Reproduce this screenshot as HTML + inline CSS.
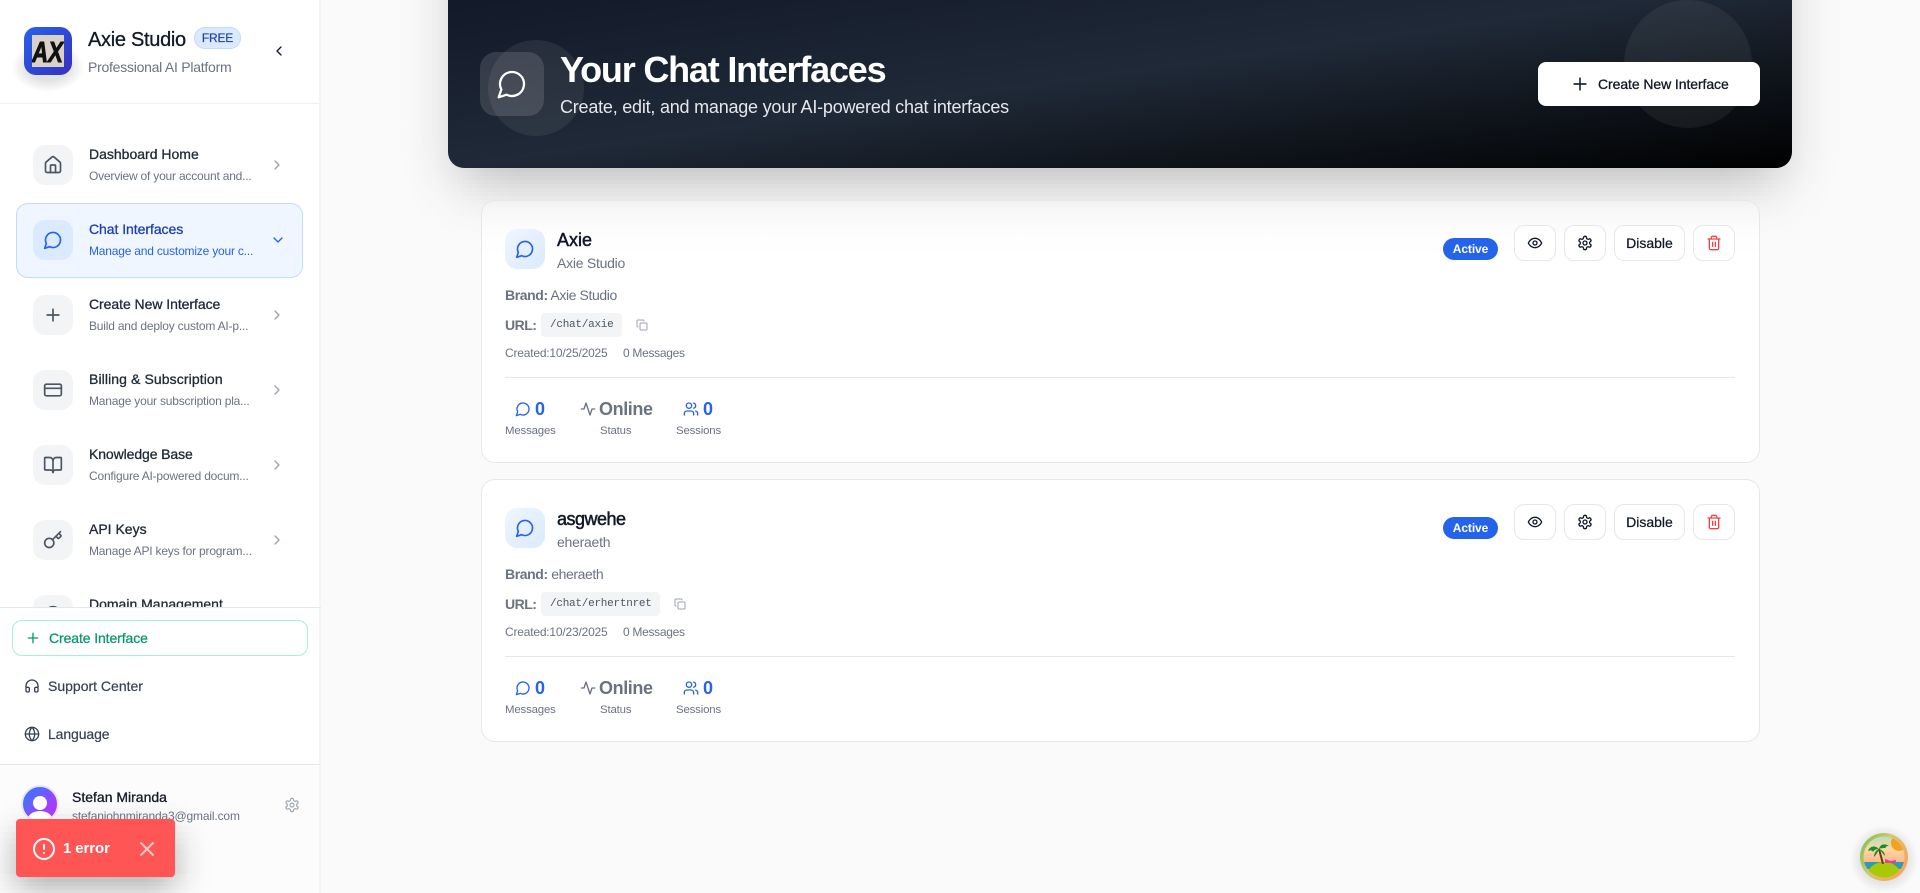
<!DOCTYPE html>
<html lang="en"><head><meta charset="utf-8"><title>Your Chat Interfaces</title>
<style>
*{box-sizing:border-box}
html,body{margin:0;padding:0;width:1920px;height:893px;overflow:hidden;background:#fafafa;font-family:"Liberation Sans",sans-serif}
.a{position:absolute}
.s{position:absolute;left:0;width:100%}
.t{position:absolute;white-space:nowrap;line-height:20px}
svg.i{position:absolute;fill:none;stroke:currentColor;stroke-width:2;stroke-linecap:round;stroke-linejoin:round}
.box{position:absolute;left:33px;width:40px;height:40px;border-radius:12px;background:#f3f4f6}
.nt{left:89px;font-size:14px;font-weight:400;color:#1f2937;-webkit-text-stroke:.3px #1f2937}
.ns{left:89px;font-size:12px;color:#6b7280;letter-spacing:-.2px}
.btn{position:absolute;top:0;height:36px;background:#fff;border:1px solid #e5e7eb;border-radius:10px}
.card{position:absolute;left:481px;width:1279px;height:263px;background:#fff;border:1px solid #e5e7eb;border-radius:14px}
.g{color:#6b7280}
.lb{font-size:11.4px;letter-spacing:-.15px}
.mono{font-size:11px;letter-spacing:-.25px;color:#4b5563;font-family:'Liberation Mono',monospace}
</style></head><body>
<svg width="0" height="0" style="position:absolute"><defs>
<symbol id="msg" viewBox="0 0 24 24"><path d="M7.9 20A9 9 0 1 0 4 16.1L2 22Z"/></symbol>
<symbol id="home" viewBox="0 0 24 24"><path d="M15 21v-8a1 1 0 0 0-1-1h-4a1 1 0 0 0-1 1v8"/><path d="M3 10a2 2 0 0 1 .709-1.528l7-5.999a2 2 0 0 1 2.582 0l7 5.999A2 2 0 0 1 21 10v9a2 2 0 0 1-2 2H5a2 2 0 0 1-2-2z"/></symbol>
<symbol id="plus" viewBox="0 0 24 24"><path d="M5 12h14M12 5v14"/></symbol>
<symbol id="card" viewBox="0 0 24 24"><rect x="2" y="5" width="20" height="14" rx="2"/><path d="M2 10h20"/></symbol>
<symbol id="book" viewBox="0 0 24 24"><path d="M12 7v14"/><path d="M3 18a1 1 0 0 1-1-1V4a1 1 0 0 1 1-1h5a4 4 0 0 1 4 4 4 4 0 0 1 4-4h5a1 1 0 0 1 1 1v13a1 1 0 0 1-1 1h-6a3 3 0 0 0-3 3 3 3 0 0 0-3-3z"/></symbol>
<symbol id="key" viewBox="0 0 24 24"><path d="m15.5 7.5 2.3 2.3a1 1 0 0 0 1.4 0l2.1-2.1a1 1 0 0 0 0-1.4L19 4"/><path d="m21 2-9.6 9.6"/><circle cx="7.5" cy="15.5" r="5.5"/></symbol>
<symbol id="cr" viewBox="0 0 24 24"><path d="m9 18 6-6-6-6"/></symbol>
<symbol id="cd" viewBox="0 0 24 24"><path d="m6 9 6 6 6-6"/></symbol>
<symbol id="cl" viewBox="0 0 24 24"><path d="m15 18-6-6 6-6"/></symbol>
<symbol id="head" viewBox="0 0 24 24"><path d="M3 14h3a2 2 0 0 1 2 2v3a2 2 0 0 1-2 2H5a2 2 0 0 1-2-2v-7a9 9 0 0 1 18 0v7a2 2 0 0 1-2 2h-1a2 2 0 0 1-2-2v-3a2 2 0 0 1 2-2h3"/></symbol>
<symbol id="globe" viewBox="0 0 24 24"><circle cx="12" cy="12" r="10"/><path d="M12 2a14.500 14.500 0 0 0 0 20 14.500 14.500 0 0 0 0-20"/><path d="M2 12h20"/></symbol>
<symbol id="gear" viewBox="0 0 24 24"><path d="M12.220 2h-.44a2 2 0 0 0-2 2v.18a2 2 0 0 1-1 1.730l-.43.25a2 2 0 0 1-2 0l-.15-.08a2 2 0 0 0-2.730.73l-.22.38a2 2 0 0 0 .73 2.730l.15.1a2 2 0 0 1 1 1.720v.51a2 2 0 0 1-1 1.740l-.15.09a2 2 0 0 0-.73 2.730l.22.38a2 2 0 0 0 2.730.73l.15-.08a2 2 0 0 1 2 0l.43.25a2 2 0 0 1 1 1.730V20a2 2 0 0 0 2 2h.44a2 2 0 0 0 2-2v-.18a2 2 0 0 1 1-1.730l.43-.25a2 2 0 0 1 2 0l.15.08a2 2 0 0 0 2.730-.73l.22-.39a2 2 0 0 0-.73-2.730l-.15-.08a2 2 0 0 1-1-1.740v-.5a2 2 0 0 1 1-1.740l.15-.09a2 2 0 0 0 .73-2.730l-.22-.38a2 2 0 0 0-2.730-.73l-.15.08a2 2 0 0 1-2 0l-.43-.25a2 2 0 0 1-1-1.730V4a2 2 0 0 0-2-2z"/><circle cx="12" cy="12" r="3"/></symbol>
<symbol id="eye" viewBox="0 0 24 24"><path d="M2 12s3-7 10-7 10 7 10 7-3 7-10 7-10-7-10-7Z"/><circle cx="12" cy="12" r="3"/></symbol>
<symbol id="trash" viewBox="0 0 24 24"><path d="M3 6h18"/><path d="M19 6v14c0 1-1 2-2 2H7c-1 0-2-1-2-2V6"/><path d="M8 6V4c0-1 1-2 2-2h4c1 0 2 1 2 2v2"/><path d="M10 11v6M14 11v6"/></symbol>
<symbol id="copy" viewBox="0 0 24 24"><rect x="8" y="8" width="14" height="14" rx="2"/><path d="M4 16c-1.100 0-2-.9-2-2V4c0-1.100.9-2 2-2h10c1.100 0 2 .9 2 2"/></symbol>
<symbol id="act" viewBox="0 0 24 24"><path d="M22 12h-4l-3 9L9 3l-3 9H2"/></symbol>
<symbol id="users" viewBox="0 0 24 24"><path d="M16 21v-2a4 4 0 0 0-4-4H6a4 4 0 0 0-4 4v2"/><circle cx="9" cy="7" r="4"/><path d="M22 21v-2a4 4 0 0 0-3-3.870"/><path d="M16 3.130a4 4 0 0 1 0 7.750"/></symbol>
</defs></svg>

<!-- Sidebar -->
<div class="a" style="left:0;top:0;width:321px;height:893px;background:#fff;border-right:2px solid #f3f4f6"></div>
<div class="a" style="left:12px;top:42px;width:72px;height:50px;background:radial-gradient(ellipse closest-side,#e2e2e2 55%,#fff 100%)"></div>
<div class="a" style="left:24px;top:27px;width:48px;height:48px;border-radius:12px;background:linear-gradient(135deg,#2563eb,#3730c0)"></div>
<svg class="a" style="left:32px;top:35px" width="32" height="32" viewBox="0 0 32 32"><rect width="32" height="32" fill="#d9d2c9"/><text x="0" y="27" font-family="Liberation Sans" font-weight="700" font-style="italic" font-size="29" fill="#111" stroke="#111" stroke-width=".9" textLength="31" lengthAdjust="spacingAndGlyphs">AX</text></svg>
<div class="t" style="left:88px;top:28px;font-size:20px;line-height:24px;color:#111827;-webkit-text-stroke:.3px #111827;letter-spacing:-.3px">Axie Studio</div>
<div class="a" style="left:194px;top:27px;width:47px;height:22px;border-radius:11px;background:#dbeafe;border:1px solid #bfdbfe;color:#1e40af;font-size:12px;line-height:20px;text-align:center;-webkit-text-stroke:.2px #1e40af;letter-spacing:-.2px">FREE</div>
<div class="t" style="left:88px;top:57px;font-size:14px;color:#6b7280;letter-spacing:-.25px">Professional AI Platform</div>
<svg class="i" style="left:271px;top:43px;color:#111827" width="16" height="16"><use href="#cl"/></svg>
<div class="a" style="left:0;top:103px;width:319px;height:1px;background:#f0f0f1"></div>

<div class="a" style="left:0;top:104px;width:319px;height:503px;overflow:hidden">
<div class="a" style="left:0;top:-104px;width:319px;height:720px">
 <div class="box" style="top:145px"></div><svg class="i" style="left:43px;top:155px;color:#4b5563" width="20" height="20"><use href="#home"/></svg>
 <div class="t nt" style="top:144px">Dashboard Home</div><div class="t ns" style="top:166px">Overview of your account and...</div>
 <svg class="i" style="left:269px;top:157px;color:#9ca3af" width="16" height="16"><use href="#cr"/></svg>

 <div class="a" style="left:16px;top:203px;width:287px;height:75px;background:#eff6ff;border:1px solid #bfdbfe;border-radius:12px"></div>
 <div class="box" style="top:220px;background:#dbeafe"></div><svg class="i" style="left:43px;top:230px;color:#2563eb" width="20" height="20"><use href="#msg"/></svg>
 <div class="t nt" style="top:219px;color:#1e40af;-webkit-text-stroke-color:#1e40af;letter-spacing:-.05px">Chat Interfaces</div><div class="t ns" style="top:241px;color:#2563eb">Manage and customize your c...</div>
 <svg class="i" style="left:270px;top:232px;color:#2563eb" width="16" height="16"><use href="#cd"/></svg>

 <div class="box" style="top:295px"></div><svg class="i" style="left:43px;top:305px;color:#4b5563" width="20" height="20"><use href="#plus"/></svg>
 <div class="t nt" style="top:294px;letter-spacing:-.05px">Create New Interface</div><div class="t ns" style="top:316px">Build and deploy custom AI-p...</div>
 <svg class="i" style="left:269px;top:307px;color:#9ca3af" width="16" height="16"><use href="#cr"/></svg>

 <div class="box" style="top:370px"></div><svg class="i" style="left:43px;top:380px;color:#4b5563" width="20" height="20"><use href="#card"/></svg>
 <div class="t nt" style="top:369px;letter-spacing:.1px">Billing &amp; Subscription</div><div class="t ns" style="top:391px">Manage your subscription pla...</div>
 <svg class="i" style="left:269px;top:382px;color:#9ca3af" width="16" height="16"><use href="#cr"/></svg>

 <div class="box" style="top:445px"></div><svg class="i" style="left:43px;top:455px;color:#4b5563" width="20" height="20"><use href="#book"/></svg>
 <div class="t nt" style="top:444px;letter-spacing:-.1px">Knowledge Base</div><div class="t ns" style="top:466px">Configure AI-powered docum...</div>
 <svg class="i" style="left:269px;top:457px;color:#9ca3af" width="16" height="16"><use href="#cr"/></svg>

 <div class="box" style="top:520px"></div><svg class="i" style="left:43px;top:530px;color:#4b5563" width="20" height="20"><use href="#key"/></svg>
 <div class="t nt" style="top:519px">API Keys</div><div class="t ns" style="top:541px">Manage API keys for program...</div>
 <svg class="i" style="left:269px;top:532px;color:#9ca3af" width="16" height="16"><use href="#cr"/></svg>

 <div class="box" style="top:595px"></div><svg class="i" style="left:43px;top:605px;color:#4b5563" width="20" height="20"><use href="#globe"/></svg>
 <div class="t nt" style="top:594px">Domain Management</div>
</div></div>

<div class="a" style="left:0;top:607px;width:321px;height:1px;background:#e5e7eb"></div>
<div class="a" style="left:12px;top:620px;width:296px;height:36px;border:1px solid #a7f3d0;border-radius:10px;background:#fff"></div>
<svg class="i" style="left:25px;top:630px;color:#059669" width="16" height="16"><use href="#plus"/></svg>
<div class="t" style="left:49px;top:628px;font-size:14px;color:#059669;-webkit-text-stroke:.25px #059669;letter-spacing:-.1px">Create Interface</div>
<svg class="i" style="left:24px;top:678px;color:#374151" width="16" height="16"><use href="#head"/></svg>
<div class="t" style="left:48px;top:676px;font-size:14px;color:#374151;-webkit-text-stroke:.2px #374151">Support Center</div>
<svg class="i" style="left:24px;top:726px;color:#374151" width="16" height="16"><use href="#globe"/></svg>
<div class="t" style="left:48px;top:724px;font-size:14px;color:#374151;-webkit-text-stroke:.2px #374151;letter-spacing:-.1px">Language</div>

<div class="a" style="left:0;top:764px;width:321px;height:129px;background:#fcfcfc;border-top:1px solid #e5e7eb;border-right:2px solid #f3f4f6"></div>

<!-- Toast shadow: solid grey strips -->
<div class="a" style="left:0;top:790px;width:220px;height:103px">
<div class="s" style="top:6px;height:6px;background:#fb"></div>
<div class="s" style="top:6px;height:6px;background:#fbfbfb"></div>
<div class="s" style="top:12px;height:6px;background:#f9f9f9"></div>
<div class="s" style="top:18px;height:6px;background:#f6f6f6"></div>
<div class="s" style="top:24px;height:6px;background:#f0f0f0"></div>
<div class="s" style="top:30px;height:6px;background:#e7e7e7"></div>
<div class="s" style="top:36px;height:6px;background:#dcdcdc"></div>
<div class="s" style="top:42px;height:6px;background:#d0d0d0"></div>
<div class="s" style="top:48px;height:6px;background:#c5c5c5"></div>
<div class="s" style="top:54px;height:6px;background:#bcbcbc"></div>
<div class="s" style="top:60px;height:6px;background:#b6b6b6"></div>
<div class="s" style="top:66px;height:6px;background:#b3b3b3"></div>
<div class="s" style="top:72px;height:12px;background:#b2b2b2"></div>
<div class="s" style="top:84px;height:4px;background:#bfbfbf"></div>
<div class="s" style="top:88px;height:4px;background:#c5c5c5"></div>
<div class="s" style="top:92px;height:4px;background:#cccccc"></div>
<div class="s" style="top:96px;height:4px;background:#d4d4d4"></div>
<div class="s" style="top:100px;height:3px;background:#dcdcdc"></div>
</div>
<div class="a" style="left:0;top:790px;width:46px;height:103px;background:linear-gradient(to right,rgba(252,252,252,.84) 1px,rgba(252,252,252,.5) 16px,rgba(252,252,252,.16) 31px,rgba(252,252,252,0) 46px)"></div>
<div class="a" style="left:145px;top:790px;width:75px;height:103px;background:linear-gradient(to right,rgba(252,252,252,0) 0,rgba(252,252,252,.16) 15px,rgba(252,252,252,.5) 30px,rgba(252,252,252,.84) 45px,rgba(252,252,252,.98) 60px,#fcfcfc 75px)"></div>

<div class="a" style="left:21px;top:785px;width:38px;height:38px;border-radius:50%;background:linear-gradient(135deg,#4f6bff 25%,#a83bff 70%);border:2px solid #e5e7eb;overflow:hidden">
 <div class="a" style="left:10px;top:9px;width:14px;height:14px;border-radius:50%;background:#fff"></div>
 <div class="a" style="left:4px;top:24px;width:26px;height:20px;border-radius:50%;background:#fff"></div>
</div>
<div class="t" style="left:72px;top:787px;font-size:14px;color:#111827;-webkit-text-stroke:.3px #111827">Stefan Miranda</div>
<div class="t" style="left:72px;top:806px;font-size:12px;color:#6b7280;letter-spacing:-.16px">stefanjohnmiranda3@gmail.com</div>
<svg class="i" style="left:284px;top:797px;color:#9ca3af;stroke-width:1.7" width="16" height="16"><use href="#gear"/></svg>

<!-- Toast -->
<div class="a" style="left:16px;top:819px;width:159px;height:58px;background:#ff5555;border-radius:4px"></div>
<svg class="i" style="left:32px;top:837px;color:#fff" width="24" height="24"><circle cx="12" cy="12" r="10"/><path d="M12 8v4M12 16h.01"/></svg>
<div class="t" style="left:63px;top:839px;font-size:15px;font-weight:700;color:#fff;letter-spacing:-.1px">1 error</div>
<svg class="i" style="left:135px;top:837px;color:#ffc9c9" width="24" height="24"><path d="M18 6 6 18M6 6l12 12"/></svg>

<!-- Hero shadow: solid grey strips -->
<div class="a" style="left:388px;top:0;width:1464px;height:240px">
<div class="s" style="top:0;height:136px;background:#bcbcbc"></div>
<div class="s" style="top:136px;height:8px;background:#bebebe"></div>
<div class="s" style="top:144px;height:8px;background:#c0c0c0"></div>
<div class="s" style="top:152px;height:8px;background:#c3c3c3"></div>
<div class="s" style="top:160px;height:4px;background:#c8c8c8"></div>
<div class="s" style="top:164px;height:4px;background:#cbcbcb"></div>
<div class="s" style="top:168px;height:4px;background:#cecece"></div>
<div class="s" style="top:172px;height:4px;background:#d2d2d2"></div>
<div class="s" style="top:176px;height:4px;background:#d6d6d6"></div>
<div class="s" style="top:180px;height:4px;background:#dadada"></div>
<div class="s" style="top:184px;height:4px;background:#dedede"></div>
<div class="s" style="top:188px;height:4px;background:#e2e2e2"></div>
<div class="s" style="top:192px;height:4px;background:#e5e5e5"></div>
<div class="s" style="top:196px;height:4px;background:#e9e9e9"></div>
<div class="s" style="top:200px;height:4px;background:#ececec"></div>
<div class="s" style="top:204px;height:4px;background:#efefef"></div>
<div class="s" style="top:208px;height:4px;background:#f1f1f1"></div>
<div class="s" style="top:212px;height:4px;background:#f3f3f3"></div>
<div class="s" style="top:216px;height:4px;background:#f5f5f5"></div>
<div class="s" style="top:220px;height:4px;background:#f6f6f6"></div>
<div class="s" style="top:224px;height:4px;background:#f7f7f7"></div>
<div class="s" style="top:228px;height:4px;background:#f8f8f8"></div>
<div class="s" style="top:232px;height:8px;background:#f9f9f9"></div>
</div>
<div class="a" style="left:388px;top:0;width:147px;height:240px;background:linear-gradient(to right,#fafafa 0,rgba(250,250,250,.98) 22px,rgba(250,250,250,.84) 47px,rgba(250,250,250,.5) 72px,rgba(250,250,250,.16) 97px,rgba(250,250,250,.02) 122px,rgba(250,250,250,0) 147px)"></div>
<div class="a" style="left:1705px;top:0;width:147px;height:240px;background:linear-gradient(to left,#fafafa 0,rgba(250,250,250,.98) 22px,rgba(250,250,250,.84) 47px,rgba(250,250,250,.5) 72px,rgba(250,250,250,.16) 97px,rgba(250,250,250,.02) 122px,rgba(250,250,250,0) 147px)"></div>

<!-- Cards -->
<div class="card" style="top:200px;background:linear-gradient(to bottom,#f1f1f1 0,#f5f5f5 5px,#fdfdfd 30px,#fff 55px)"></div>
<div class="card" style="top:479px"></div>

<!-- Card 1 -->
<div class="a" style="left:0;top:0">
 <div class="a" style="left:505px;top:229px;width:40px;height:40px;border-radius:12px;background:linear-gradient(135deg,#eff6ff,#dbeafe)"></div>
 <svg class="i" style="left:515px;top:239px;color:#2563eb" width="20" height="20"><use href="#msg"/></svg>
 <div class="t" style="left:557px;top:230px;font-size:18px;color:#111827;-webkit-text-stroke:.5px #111827">Axie</div>
 <div class="t g" style="left:557px;top:253px;font-size:14px;letter-spacing:-.25px">Axie Studio</div>
 <div class="t g" style="left:505px;top:285px;font-size:14px;letter-spacing:-.4px"><b>Brand:</b> Axie Studio</div>
 <div class="t g" style="left:505px;top:315px;font-size:14px;letter-spacing:-.5px"><b>URL:</b></div>
 <div class="a" style="left:541px;top:313px;width:81px;height:24px;border-radius:4px;background:#f3f4f6"></div>
 <div class="t mono" style="left:550px;top:315px">/chat/axie</div>
 <svg class="i" style="left:636px;top:319px;color:#9ca3af" width="12" height="12"><use href="#copy"/></svg>
 <div class="t g" style="left:505px;top:343px;font-size:12px;letter-spacing:-.2px">Created:10/25/2025</div>
 <div class="t g" style="left:623px;top:343px;font-size:12px;letter-spacing:-.3px">0 Messages</div>
 <div class="a" style="left:505px;width:1230px;top:377px;height:1px;background:#e5e7eb"></div>
 <svg class="i" style="left:515px;top:401px;color:#2563eb" width="16" height="16"><use href="#msg"/></svg>
 <div class="t" style="left:535px;top:399px;font-size:18px;font-weight:700;color:#2563eb">0</div>
 <div class="t g lb" style="left:505px;top:421px">Messages</div>
 <svg class="i" style="left:580px;top:401px;color:#6b7280" width="16" height="16"><use href="#act"/></svg>
 <div class="t g" style="left:599px;top:399px;font-size:18px;font-weight:700;letter-spacing:-.4px">Online</div>
 <div class="t g lb" style="left:600px;top:421px">Status</div>
 <svg class="i" style="left:683px;top:401px;color:#2563eb" width="16" height="16"><use href="#users"/></svg>
 <div class="t" style="left:703px;top:399px;font-size:18px;font-weight:700;color:#2563eb">0</div>
 <div class="t g lb" style="left:676px;top:421px">Sessions</div>
 <div class="a" style="left:1443px;top:238px;width:55px;height:22px;border-radius:11px;background:#2563eb;color:#fff;font-size:12px;font-weight:700;line-height:22px;text-align:center;letter-spacing:-.1px">Active</div>
 <div class="a" style="left:0;top:225px">
  <div class="btn" style="left:1514px;width:42px"></div><svg class="i" style="left:1527px;top:10px;color:#111827" width="16" height="16"><use href="#eye"/></svg>
  <div class="btn" style="left:1564px;width:42px"></div><svg class="i" style="left:1577px;top:10px;color:#111827" width="16" height="16"><use href="#gear"/></svg>
  <div class="btn" style="left:1614px;width:71px;font-size:14px;line-height:34px;text-align:center;color:#111827;-webkit-text-stroke:.25px #111827">Disable</div>
  <div class="btn" style="left:1693px;width:42px"></div><svg class="i" style="left:1706px;top:10px;color:#ef4444" width="16" height="16"><use href="#trash"/></svg>
 </div>
</div>

<!-- Card 2 -->
<div class="a" style="left:0;top:279px">
 <div class="a" style="left:505px;top:229px;width:40px;height:40px;border-radius:12px;background:linear-gradient(135deg,#eff6ff,#dbeafe)"></div>
 <svg class="i" style="left:515px;top:239px;color:#2563eb" width="20" height="20"><use href="#msg"/></svg>
 <div class="t" style="left:557px;top:230px;font-size:18px;color:#111827;-webkit-text-stroke:.5px #111827;letter-spacing:-.5px">asgwehe</div>
 <div class="t g" style="left:557px;top:253px;font-size:14px;letter-spacing:-.25px">eheraeth</div>
 <div class="t g" style="left:505px;top:285px;font-size:14px;letter-spacing:-.4px"><b>Brand:</b> eheraeth</div>
 <div class="t g" style="left:505px;top:315px;font-size:14px;letter-spacing:-.5px"><b>URL:</b></div>
 <div class="a" style="left:541px;top:313px;width:119px;height:24px;border-radius:4px;background:#f3f4f6"></div>
 <div class="t mono" style="left:550px;top:315px">/chat/erhertnret</div>
 <svg class="i" style="left:674px;top:319px;color:#9ca3af" width="12" height="12"><use href="#copy"/></svg>
 <div class="t g" style="left:505px;top:343px;font-size:12px;letter-spacing:-.2px">Created:10/23/2025</div>
 <div class="t g" style="left:623px;top:343px;font-size:12px;letter-spacing:-.3px">0 Messages</div>
 <div class="a" style="left:505px;width:1230px;top:377px;height:1px;background:#e5e7eb"></div>
 <svg class="i" style="left:515px;top:401px;color:#2563eb" width="16" height="16"><use href="#msg"/></svg>
 <div class="t" style="left:535px;top:399px;font-size:18px;font-weight:700;color:#2563eb">0</div>
 <div class="t g lb" style="left:505px;top:421px">Messages</div>
 <svg class="i" style="left:580px;top:401px;color:#6b7280" width="16" height="16"><use href="#act"/></svg>
 <div class="t g" style="left:599px;top:399px;font-size:18px;font-weight:700;letter-spacing:-.4px">Online</div>
 <div class="t g lb" style="left:600px;top:421px">Status</div>
 <svg class="i" style="left:683px;top:401px;color:#2563eb" width="16" height="16"><use href="#users"/></svg>
 <div class="t" style="left:703px;top:399px;font-size:18px;font-weight:700;color:#2563eb">0</div>
 <div class="t g lb" style="left:676px;top:421px">Sessions</div>
 <div class="a" style="left:1443px;top:238px;width:55px;height:22px;border-radius:11px;background:#2563eb;color:#fff;font-size:12px;font-weight:700;line-height:22px;text-align:center;letter-spacing:-.1px">Active</div>
 <div class="a" style="left:0;top:225px">
  <div class="btn" style="left:1514px;width:42px"></div><svg class="i" style="left:1527px;top:10px;color:#111827" width="16" height="16"><use href="#eye"/></svg>
  <div class="btn" style="left:1564px;width:42px"></div><svg class="i" style="left:1577px;top:10px;color:#111827" width="16" height="16"><use href="#gear"/></svg>
  <div class="btn" style="left:1614px;width:71px;font-size:14px;line-height:34px;text-align:center;color:#111827;-webkit-text-stroke:.25px #111827">Disable</div>
  <div class="btn" style="left:1693px;width:42px"></div><svg class="i" style="left:1706px;top:10px;color:#ef4444" width="16" height="16"><use href="#trash"/></svg>
 </div>
</div>

<!-- Hero -->
<div class="a" style="left:448px;top:-20px;width:1344px;height:188px;border-radius:16px;background:linear-gradient(to bottom right,#111827,#1f2937 50%,#000)">
 <div class="a" style="left:0;top:0;width:1344px;height:188px;border-radius:16px;overflow:hidden">
  <div class="a" style="left:40px;top:60px;width:96px;height:96px;border-radius:50%;background:rgba(255,255,255,.07)"></div>
  <div class="a" style="left:1176px;top:20px;width:128px;height:128px;border-radius:50%;background:rgba(255,255,255,.06)"></div>
 </div>
 <div class="a" style="left:32px;top:72px;width:64px;height:64px;border-radius:16px;background:rgba(255,255,255,.13)"></div>
 <svg class="i" style="left:48px;top:88px;color:#fff;stroke-width:1.7" width="32" height="32"><use href="#msg"/></svg>
 <div class="t" style="left:112px;top:68px;font-size:36px;line-height:44px;font-weight:700;color:#fff;letter-spacing:-1.2px">Your Chat Interfaces</div>
 <div class="t" style="left:112px;top:115px;font-size:18px;line-height:24px;color:#e5e7eb;letter-spacing:-.22px">Create, edit, and manage your AI-powered chat interfaces</div>
 <div class="a" style="left:1090px;top:82px;width:222px;height:44px;border-radius:8px;background:#fff"></div>
 <svg class="i" style="left:1122px;top:94px;color:#1f2937" width="20" height="20"><use href="#plus"/></svg>
 <div class="t" style="left:1150px;top:94px;font-size:14px;color:#111827;-webkit-text-stroke:.3px #111827;letter-spacing:-.08px">Create New Interface</div>
</div>

<!-- Floating widget -->
<div class="a" style="left:1846px;top:825px;width:76px;height:68px;background:radial-gradient(circle closest-side,#e4e4e4 68%,#fafafa 100%)"></div>
<svg class="a" style="left:1860px;top:833px" width="48" height="48" viewBox="0 0 48 48">
<defs><linearGradient id="r" x1="0" y1="0" x2="1" y2=".6"><stop offset="0" stop-color="#6fbf4a"/><stop offset=".5" stop-color="#d2c96a"/><stop offset="1" stop-color="#f8a55f"/></linearGradient>
<linearGradient id="s" x1="0" y1="0" x2="0" y2="1"><stop offset="0" stop-color="#a7e0c8"/><stop offset=".35" stop-color="#fdd7a0"/><stop offset=".7" stop-color="#ffa98a"/></linearGradient>
<clipPath id="cc"><circle cx="24" cy="24" r="20.5"/></clipPath></defs>
<circle cx="24" cy="24" r="24" fill="url(#r)"/>
<g clip-path="url(#cc)"><rect width="48" height="48" fill="url(#s)"/>
<circle cx="39" cy="10" r="8" fill="#f5a021"/>
<rect y="29" width="48" height="7" fill="#2b9db0"/>
<ellipse cx="24" cy="41" rx="16" ry="12" fill="#a9c805"/>
<path d="M19 16l4 15" stroke="#6b3d12" stroke-width="2" fill="none"/>
<path d="M19 16c-4-4-9-3-11 2 3-1 4-1 5 1 1-2 3-3 6-3zM19 16c1-5 6-6 10-3-3 0-4 1-3 2-2 0-5 0-7 1zM19 16c-3 1-5 4-5 8 2-2 4-5 5-8zM19 16c3 1 6 3 6 7-2-2-4-5-6-7z" fill="#178f2a"/>
<path d="M25 26l6 2 5-1v3h-11z" fill="#e6409a"/></g>
</svg>
</body></html>
